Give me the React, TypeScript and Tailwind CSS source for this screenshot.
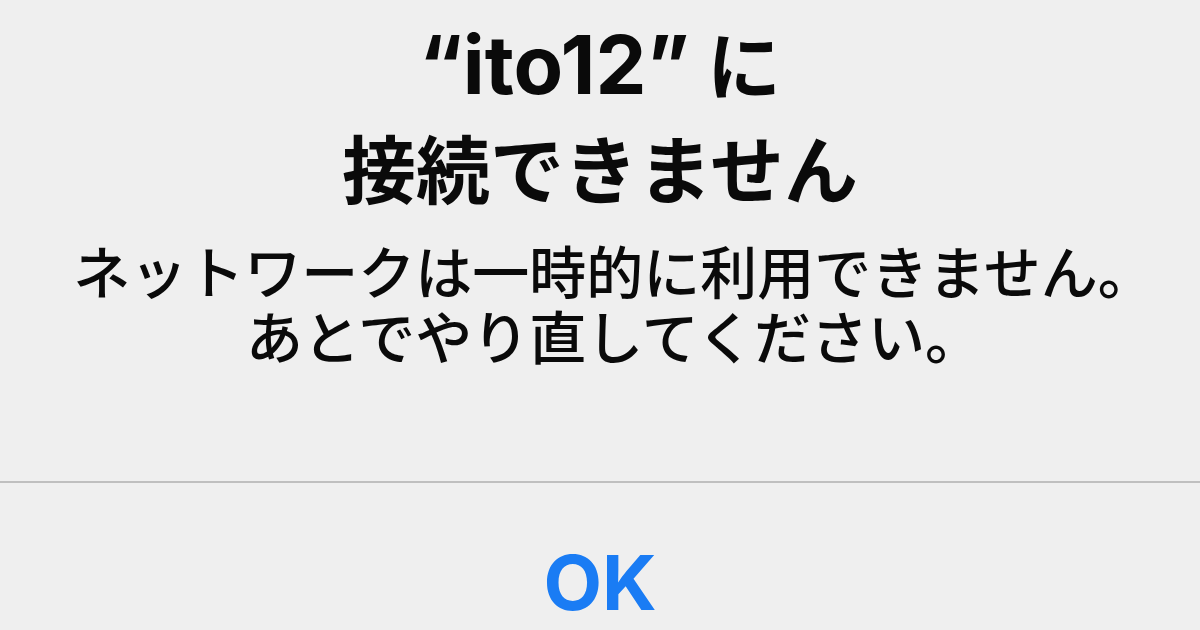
export default function App() {
  return (
    <div className="w-[1200px] h-[630px] overflow-hidden bg-[#efefef] flex flex-col font-['Inter','Noto_Sans_CJK_JP',sans-serif] text-[#0a0a0a]">
      {/* Alert message */}
      <div className="h-[481px] shrink-0 flex flex-col items-center pt-[15px]">
        <h1 className="text-[74px] leading-[104px] font-bold text-center">
          <span className="text-[81px] leading-none">“ito12”</span> に
          <br />
          接続できません
        </h1>
        <p className="mt-[18px] pl-[28px] text-[57px] leading-[65px] font-medium text-center">
          ネットワークは一時的に利用できません。
          <br />
          あとでやり直してください。
        </p>
      </div>

      <div className="h-[2px] shrink-0 bg-[#bfbfbf]" />

      {/* Action button */}
      <button className="flex-1 flex justify-center pt-[61px] text-[76px] leading-none font-bold text-[#1a7cf4]">
        OK
      </button>
    </div>
  );
}
